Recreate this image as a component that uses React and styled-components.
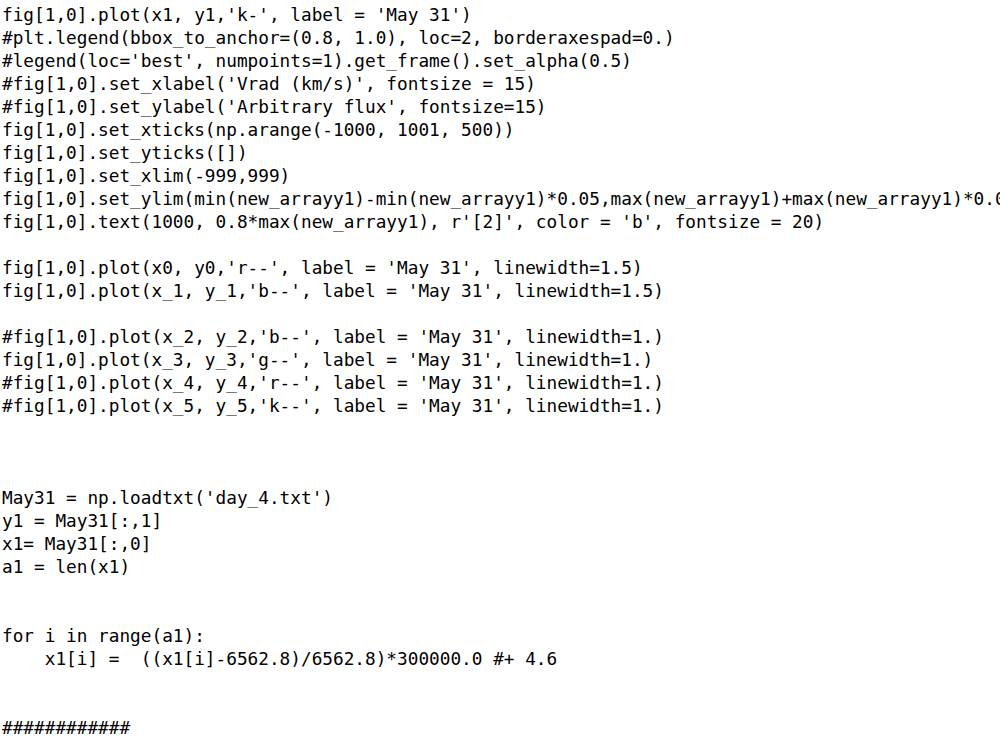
import React from "react";
import styled, { createGlobalStyle } from "styled-components";

const GlobalStyle = createGlobalStyle`
    html, body {
        margin: 0;
        padding: 0;
        background: #ffffff;
    }
`;

const Listing = styled.pre`
    margin: 0;
    padding: 4px 0 0 2px;
    width: 1000px;
    height: 750px;
    overflow: hidden;
    box-sizing: border-box;
    font-family: "DejaVu Sans Mono", "Liberation Mono", monospace;
    font-size: 17.74px;
    line-height: 23px;
    color: #000000;
    white-space: pre;
`;

const Line = styled.div`
    height: 23px;
`;

const code = [
    "fig[1,0].plot(x1, y1,'k-', label = 'May 31')",
    "#plt.legend(bbox_to_anchor=(0.8, 1.0), loc=2, borderaxespad=0.)",
    "#legend(loc='best', numpoints=1).get_frame().set_alpha(0.5)",
    "#fig[1,0].set_xlabel('Vrad (km/s)', fontsize = 15)",
    "#fig[1,0].set_ylabel('Arbitrary flux', fontsize=15)",
    "fig[1,0].set_xticks(np.arange(-1000, 1001, 500))",
    "fig[1,0].set_yticks([])",
    "fig[1,0].set_xlim(-999,999)",
    "fig[1,0].set_ylim(min(new_arrayy1)-min(new_arrayy1)*0.05,max(new_arrayy1)+max(new_arrayy1)*0.05)",
    "fig[1,0].text(1000, 0.8*max(new_arrayy1), r'[2]', color = 'b', fontsize = 20)",
    "",
    "fig[1,0].plot(x0, y0,'r--', label = 'May 31', linewidth=1.5)",
    "fig[1,0].plot(x_1, y_1,'b--', label = 'May 31', linewidth=1.5)",
    "",
    "#fig[1,0].plot(x_2, y_2,'b--', label = 'May 31', linewidth=1.)",
    "fig[1,0].plot(x_3, y_3,'g--', label = 'May 31', linewidth=1.)",
    "#fig[1,0].plot(x_4, y_4,'r--', label = 'May 31', linewidth=1.)",
    "#fig[1,0].plot(x_5, y_5,'k--', label = 'May 31', linewidth=1.)",
    "",
    "",
    "",
    "May31 = np.loadtxt('day_4.txt')",
    "y1 = May31[:,1]",
    "x1= May31[:,0]",
    "a1 = len(x1)",
    "",
    "",
    "for i in range(a1):",
    "    x1[i] =  ((x1[i]-6562.8)/6562.8)*300000.0 #+ 4.6",
    "",
    "",
    "############",
];

const App = () => {
    return (
        <>
            <GlobalStyle />
            <Listing>
                {code.map((line, i) => (
                    <Line key={i}>{line}</Line>
                ))}
            </Listing>
        </>
    );
};

export default App;
